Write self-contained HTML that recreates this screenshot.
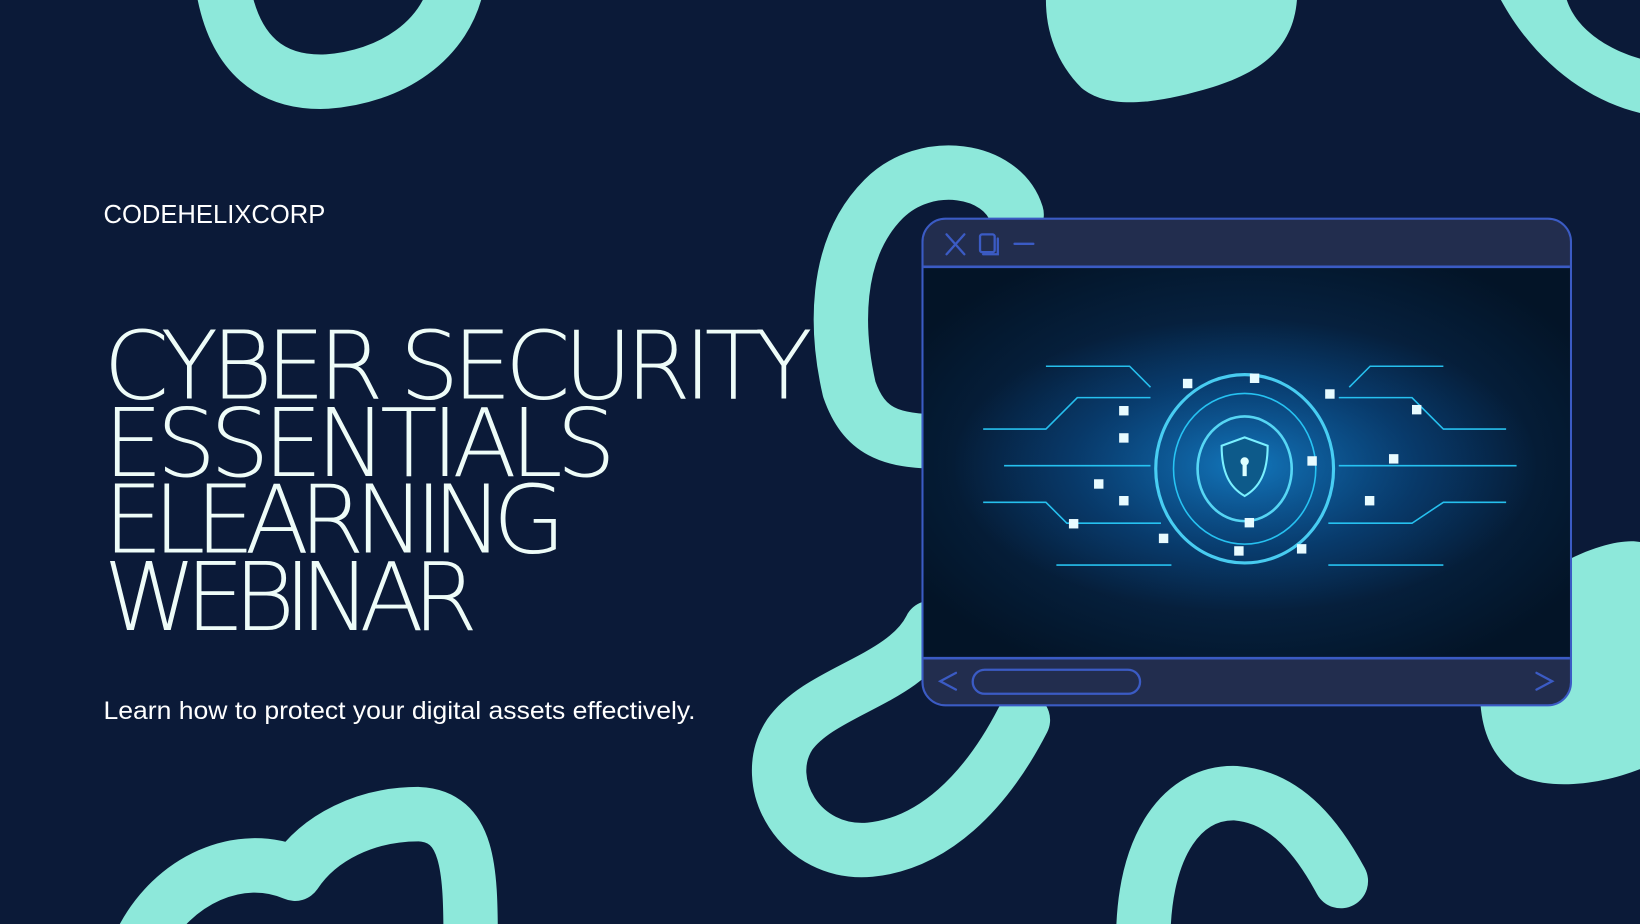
<!DOCTYPE html>
<html><head><meta charset="utf-8"><style>
html,body{margin:0;padding:0;background:#0b1a38;overflow:hidden}
svg{display:block}
</style></head><body>
<svg width="1640" height="924" viewBox="0 0 1568 883" preserveAspectRatio="none" xmlns="http://www.w3.org/2000/svg">
<defs>
<radialGradient id="bg" cx="0.5" cy="0.5" r="0.6">
<stop offset="0" stop-color="#0a3a68"/><stop offset="0.6" stop-color="#06213f"/><stop offset="1" stop-color="#031427"/>
</radialGradient>
<radialGradient id="glow" cx="0.5" cy="0.5" r="0.5">
<stop offset="0" stop-color="#1aa8ff" stop-opacity="0.55"/><stop offset="0.6" stop-color="#0b6cc4" stop-opacity="0.25"/><stop offset="1" stop-color="#0b6cc4" stop-opacity="0"/>
</radialGradient>
</defs>
<rect width="1568" height="883" fill="#0b1a38"/>
<g fill="none" stroke="#8de8da" stroke-width="52" stroke-linecap="round" stroke-linejoin="round">
<path d="M212,-20 C222,55 262,80 312,78 C372,74 428,40 438,-20"/>
<path d="M972,205 C958,160 885,150 845,190 C795,240 800,320 812,372 C826,412 850,422 900,422"/>
<path d="M890,600 C865,650 785,660 755,702 C725,748 765,818 832,812 C892,806 942,758 978,688"/>
<path d="M1093,900 C1093,805 1132,756 1182,758 C1232,762 1262,805 1282,842"/>
<path d="M135,900 C165,840 230,812 282,835 C305,800 350,778 400,778 C448,780 450,830 450,900"/>
</g>
<g fill="#8de8da">
<path d="M1000,0 L1240,0 C1236,50 1200,72 1150,86 C1100,100 1058,104 1034,84 C1010,60 1000,30 1000,0Z"/>
<path d="M1435,0 L1498,0 C1508,30 1540,48 1568,56 L1568,108 C1518,96 1468,60 1435,0Z"/>
<path d="M1490,540 C1525,520 1555,515 1568,518 L1568,735 C1530,750 1480,756 1450,740 C1422,720 1415,690 1415,660 L1490,620Z"/>
</g>
<text x="99" y="213" fill="#ffffff" font-family="Liberation Sans, sans-serif" font-size="25" textLength="212" lengthAdjust="spacingAndGlyphs">CODEHELIXCORP</text>
<g fill="#eefcf8" font-family="DejaVu Sans ExtraLight, DejaVu Sans Light, Liberation Sans, sans-serif" font-size="90" font-weight="200" lengthAdjust="spacingAndGlyphs">
<text x="99" y="381" textLength="678">CYBER SECURITY</text>
<text x="99" y="455" textLength="490">ESSENTIALS</text>
<text x="99" y="528" textLength="442">ELEARNING</text>
<text x="99" y="602" textLength="358">WEBINAR</text>
</g>
<text x="99" y="687" fill="#ffffff" font-family="Liberation Sans, sans-serif" font-size="24" textLength="566" lengthAdjust="spacingAndGlyphs">Learn how to protect your digital assets effectively.</text>
<rect x="882" y="209" width="620" height="465" rx="22" fill="#222d4e" stroke="#3b5bc4" stroke-width="2"/>
<rect x="883" y="255" width="618" height="374" fill="url(#bg)"/>
<line x1="883" y1="255" x2="1501" y2="255" stroke="#3b5bc4" stroke-width="2.5"/>
<line x1="883" y1="629" x2="1501" y2="629" stroke="#3b5bc4" stroke-width="2.5"/>
<ellipse cx="1190" cy="445" rx="280" ry="140" fill="url(#glow)"/>
<g fill="none" stroke="#2ad0ff" stroke-width="1.5" opacity="0.9">
<ellipse cx="1190" cy="448" rx="85" ry="90" stroke-width="3" stroke="#4fdcff"/>
<ellipse cx="1190" cy="448" rx="68" ry="72"/>
<ellipse cx="1190" cy="448" rx="45" ry="50" stroke-width="2.5" stroke="#5fe4ff"/>
<path d="M940,410 H1000 L1030,380 H1100 M940,480 H1000 L1020,500 H1110 M1280,380 H1350 L1380,410 H1440 M1270,500 H1350 L1380,480 H1440 M960,445 H1100 M1280,445 H1450 M1000,350 H1080 L1100,370 M1290,370 L1310,350 H1380 M1010,540 H1120 M1270,540 H1380"/>
</g>
<path d="M1190,418 L1212,426 C1212,452 1204,466 1190,474 C1176,466 1168,452 1168,426 Z" fill="#0d5a8a" stroke="#7af0ff" stroke-width="2"/>
<circle cx="1190" cy="441" r="4" fill="#dff"/><rect x="1188" y="443" width="4" height="12" fill="#dff"/>
<g fill="#e8fbff">
<rect x="1131" y="362" width="9" height="9"/><rect x="1195" y="357" width="9" height="9"/><rect x="1267" y="372" width="9" height="9"/><rect x="1070" y="388" width="9" height="9"/><rect x="1350" y="387" width="9" height="9"/><rect x="1070" y="414" width="9" height="9"/><rect x="1328" y="434" width="9" height="9"/><rect x="1046" y="458" width="9" height="9"/><rect x="1070" y="474" width="9" height="9"/><rect x="1305" y="474" width="9" height="9"/><rect x="1022" y="496" width="9" height="9"/><rect x="1108" y="510" width="9" height="9"/><rect x="1180" y="522" width="9" height="9"/><rect x="1240" y="520" width="9" height="9"/><rect x="1250" y="436" width="9" height="9"/><rect x="1190" y="495" width="9" height="9"/>
</g>
<g fill="none" stroke="#3b5bc4" stroke-width="2.2" stroke-linecap="round">
<path d="M905,224 L922,243 M922,224 L905,243"/>
<rect x="937" y="224" width="14" height="17" rx="2"/>
<path d="M940,243 H954 V228"/>
<path d="M970,233 H988"/>
<path d="M914,643 L899,651 L914,659"/>
<path d="M1469,643 L1484,651 L1469,659"/>
<rect x="930" y="640" width="160" height="23" rx="11.5"/>
</g>
</svg>
</body></html>
